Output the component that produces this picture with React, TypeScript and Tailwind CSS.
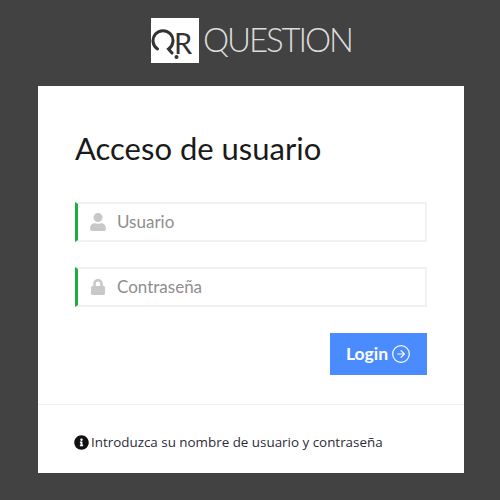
import React from 'react';
import { FaUser, FaLock, FaInfoCircle } from 'react-icons/fa';
import { CircleArrowRight } from 'lucide-react';

const Logo: React.FC = () => (
  <div className="flex items-center h-[45px] ml-[151px] self-start">
    <div className="w-[48px] h-[45px] bg-white flex items-start">
      <svg width="28" height="45" viewBox="0 0 28 45" fill="none" className="shrink-0">
        <path d="M6.5 31 A10 10 0 1 1 17.5 31 L21 35" stroke="#333333" strokeWidth="3" strokeLinecap="round" />
        <circle cx="25.5" cy="39" r="2" fill="#333333" />
      </svg>
      <span className="ml-[-5px] mt-[10px] font-['Lato'] text-[29px] leading-[29px] text-[#333333]">R</span>
    </div>
    <span className="ml-[4px] mt-[-2px] font-['Lato'] font-light text-[33px] leading-none text-[#dcdcdc] tracking-[-2.1px]">QUESTION</span>
  </div>
);

const Field: React.FC<{ icon: React.ReactNode; placeholder: string }> = ({ icon, placeholder }) => (
  <div className="h-[40px] flex items-center border-2 border-[#f1f1f1] border-l-[3px] border-l-[#1fae3c] pl-[11px]">
    <span className="w-[18px] flex justify-center text-[#c8c8c8]">{icon}</span>
    <span className="ml-[10px] font-['Lato'] text-[17px] text-[#8e8e8e]">{placeholder}</span>
  </div>
);

const App: React.FC = () => {
  return (
    <div className="w-[500px] h-[500px] bg-[#424242] flex flex-col pt-[18px] overflow-hidden">
      <Logo />
      <div className="mt-[23px] ml-[38px] w-[426px] h-[387px] bg-white flex flex-col">
        <div className="px-[37px] pt-[43px]">
          <h1 className="font-['Lato'] text-[31px] leading-[38px] text-[#1a1a1a]">Acceso de usuario</h1>
          <div className="mt-[35px] flex flex-col gap-[25px]">
            <Field icon={<FaUser size={18} />} placeholder="Usuario" />
            <Field icon={<FaLock size={16} />} placeholder="Contraseña" />
          </div>
          <div className="mt-[26px] flex justify-end">
            <button className="w-[97px] h-[42px] bg-[#4a8cff] text-white font-['Lato'] font-bold text-[17.5px] flex items-center justify-center gap-[3px]">
              Login
              <CircleArrowRight size={20} strokeWidth={1.4} />
            </button>
          </div>
        </div>
        <div className="mt-[29px] border-t border-[#efefef] pl-[36px] pr-[37px] pt-[28px] flex items-center gap-[2px]">
          <FaInfoCircle size={15} className="text-[#111111]" />
          <span className="font-['Open_Sans'] text-[13.4px] leading-[18px] text-[#2c2c3a]">Introduzca su nombre de usuario y contraseña</span>
        </div>
      </div>
    </div>
  );
};

export default App;
